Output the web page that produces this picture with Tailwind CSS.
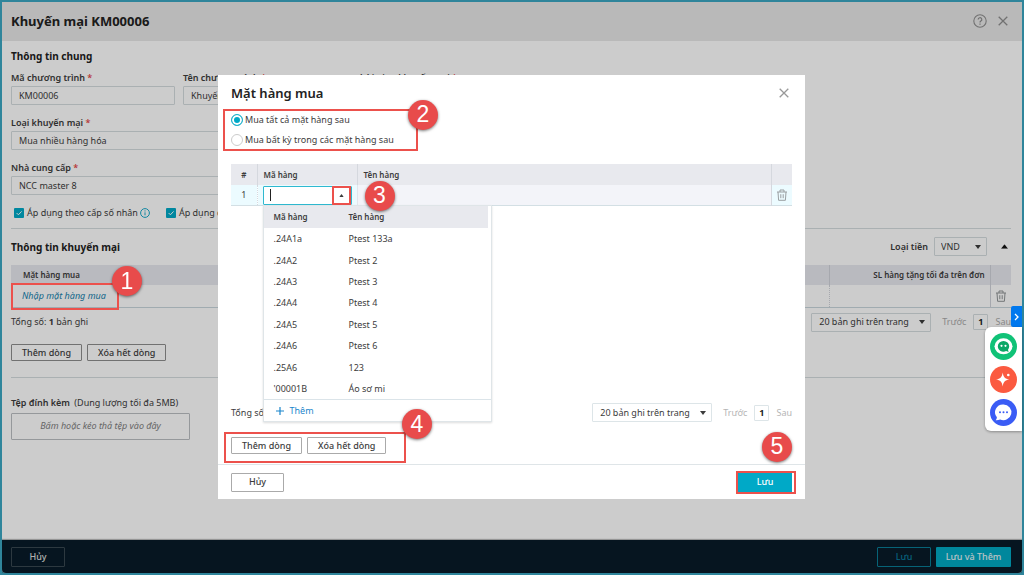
<!DOCTYPE html>
<html lang="vi">
  <head>
    <meta charset="UTF-8" />
    <meta name="viewport" content="width=device-width, initial-scale=1.0" />
    <script src="https://cdn.jsdelivr.net/npm/@tailwindcss/browser@4"></script>
    <title>Khuyến mại KM00006</title>
  </head>
  <body class="h-screen overflow-hidden bg-[#2f859b] p-0.5 font-['Noto_Sans',sans-serif] text-[9px] leading-3 text-[#3c3c3c]">
    <!-- Shared icons -->
    <svg class="hidden">
      <symbol id="caret" viewBox="0 0 6 4"><path d="M0 0h6L3 4z" fill="currentColor" /></symbol>
      <symbol id="close" viewBox="0 0 10 10"><path d="M.7.7l8.6 8.6M9.3.7L.7 9.3" fill="none" stroke="currentColor" stroke-width="1.3" /></symbol>
      <symbol id="trash" viewBox="0 0 12 12">
        <path d="M1 3h10M4 3V1h4v2M2 3l.6 8.3h6.8L10 3M4.8 5.2v4M7.2 5.2v4" fill="none" stroke="currentColor" stroke-width="1" />
      </symbol>
      <symbol id="check" viewBox="0 0 10 10"><path d="M2.6 5l1.8 1.8 3.2-3.4" fill="none" stroke="#fff" stroke-width="1" /></symbol>
    </svg>

    <div class="flex h-full flex-col overflow-hidden rounded-b-sm bg-white">
      <header class="flex h-[39px] shrink-0 items-center justify-between bg-[#e8e8e8] pr-[11px] pb-px pl-[9px]">
        <h1 class="text-[13px] leading-[18px] font-bold text-[#222]">Khuyến mại KM00006</h1>
        <div class="flex items-center gap-[11px] pr-[3px] text-[#8e8e8e]">
          <button aria-label="Trợ giúp">
            <svg class="size-[14px]" viewBox="0 0 14 14" fill="none" stroke="currentColor">
              <circle cx="7" cy="7" r="6.2" stroke-width="1.1" />
              <path d="M5.2 5.6a1.8 1.8 0 1 1 2.7 1.5c-.6.4-.9.7-.9 1.4M7 9.5v1.2" stroke-width="1.2" />
            </svg>
          </button>
          <button aria-label="Đóng"><svg class="size-[10px]"><use href="#close" /></svg></button>
        </div>
      </header>

      <main class="flex-1 pt-[7px] pr-[11px] pl-[9px]">
        <h2 class="text-[10px] leading-4 font-bold text-[#222]">Thông tin chung</h2>
        <div class="mt-2 flex gap-2">
          <div class="flex w-[164px] flex-col gap-0.5">
            <label for="code" class="font-semibold">Mã chương trình <span class="text-[#e54848]">*</span></label>
            <input id="code" value="KM00006" class="h-[19px] rounded-[1px] border border-[#d5dcdf] px-[7px]" />
          </div>
          <div class="flex w-[164px] flex-col gap-0.5">
            <label for="name" class="font-semibold">Tên chương trình <span class="text-[#e54848]">*</span></label>
            <input id="name" value="Khuyến mại KM00006" class="h-[19px] rounded-[1px] border border-[#d5dcdf] px-[7px]" />
          </div>
          <div class="flex w-[164px] flex-col gap-0.5">
            <label for="time" class="font-semibold">Thời gian khuyến mại <span class="text-[#e54848]">*</span></label>
            <input id="time" class="h-[19px] rounded-[1px] border border-[#d5dcdf] px-[7px]" />
          </div>
        </div>
        <div class="mt-3 flex w-[336px] flex-col gap-0.5">
          <label for="type" class="font-semibold">Loại khuyến mại <span class="text-[#e54848]">*</span></label>
          <select id="type" class="h-[19px] appearance-none rounded-[1px] border border-[#d5dcdf] px-[7px]">
            <option>Mua nhiều hàng hóa</option>
          </select>
        </div>
        <div class="mt-3 flex w-[336px] flex-col gap-0.5">
          <label for="supplier" class="font-semibold">Nhà cung cấp <span class="text-[#e54848]">*</span></label>
          <select id="supplier" class="h-[19px] appearance-none rounded-[1px] border border-[#d5dcdf] px-[7px]">
            <option>NCC master 8</option>
          </select>
        </div>
        <div class="mt-3 flex h-3 items-center pl-[3px]">
          <label class="flex items-center gap-[3px]">
            <span class="grid size-[10px]">
              <input type="checkbox" checked class="col-start-1 row-start-1 size-[10px] appearance-none rounded-[1px] bg-[#00a9c7]" />
              <svg class="pointer-events-none col-start-1 row-start-1 size-[10px]"><use href="#check" /></svg>
            </span>
            Áp dụng theo cấp số nhân
          </label>
          <svg class="mr-4 ml-0.5 size-[10px] text-[#18a9cb]" viewBox="0 0 10 10" fill="none" stroke="currentColor">
            <circle cx="5" cy="5" r="4.4" /><path d="M5 4.3v3M5 2.4v1.1" />
          </svg>
          <label class="flex items-center gap-[3px]">
            <span class="grid size-[10px]">
              <input type="checkbox" checked class="col-start-1 row-start-1 size-[10px] appearance-none rounded-[1px] bg-[#00a9c7]" />
              <svg class="pointer-events-none col-start-1 row-start-1 size-[10px]"><use href="#check" /></svg>
            </span>
            Áp dụng cùng KM khác
          </label>
        </div>

        <hr class="mt-[9px] border-[#d5dcdf]" />

        <div class="mt-2 flex items-center justify-between">
          <h2 class="text-[10px] leading-4 font-bold text-[#222]">Thông tin khuyến mại</h2>
          <div class="flex items-center">
            <label for="currency" class="font-semibold">Loại tiền</label>
            <div class="ml-[6px] grid items-center">
              <select id="currency" class="col-start-1 row-start-1 h-[19px] w-[53px] appearance-none rounded-[1px] border border-[#d5dcdf] px-1.5">
                <option>VND</option>
              </select>
              <svg class="pointer-events-none col-start-1 row-start-1 mr-1.5 h-[4px] w-[6px] justify-self-end"><use href="#caret" /></svg>
            </div>
            <button aria-label="Thu gọn" class="mr-[3px] ml-[14px] text-[#111]">
              <svg class="h-[5px] w-[7px] rotate-180" viewBox="0 0 6 4"><use href="#caret" /></svg>
            </button>
          </div>
        </div>

        <table class="mt-[9px] w-full table-fixed border-b border-[#c9d6dc]">
          <colgroup>
            <col />
            <col class="w-[161px]" />
            <col class="w-[21px]" />
          </colgroup>
          <thead class="bg-[#e8e9ef]">
            <tr class="h-5 text-[8px]">
              <th class="pl-3 text-left font-semibold">Mặt hàng mua</th>
              <th class="border-l border-[#d0d3da] pr-[5px] text-right font-semibold">SL hàng tặng tối đa trên đơn</th>
              <th class="border-l border-[#d0d3da]"></th>
            </tr>
          </thead>
          <tbody>
            <tr class="h-[22px]">
              <td class="relative pl-[11px] text-left">
                <a href="#" class="text-[#157fae] italic">Nhập mặt hàng mua</a>
                <span class="absolute -top-0.5 left-0 z-30 h-[27px] w-[108px] border-2 border-[#ec514c]"></span>
                <span class="absolute -top-[19px] left-[101px] z-30 grid size-[30px] place-items-center rounded-full bg-[#e84b4b] font-['Liberation_Sans',sans-serif] text-[23px] leading-none font-normal text-white shadow-[0_1px_3px_#0008]">1</span>
              </td>
              <td class="border-l border-dotted border-[#d0d3da]"></td>
              <td class="border-l border-[#d0d3da] text-[#909496]">
                <button aria-label="Xóa dòng" class="mx-auto block"><svg class="size-3"><use href="#trash" /></svg></button>
              </td>
            </tr>
          </tbody>
        </table>

        <div class="mt-[5px] flex items-center justify-between">
          <p>Tổng số: <b>1</b> bản ghi</p>
          <div class="flex items-center text-[#aaa]">
            <div class="grid items-center text-[#3c3c3c]">
              <select aria-label="Số bản ghi" class="col-start-1 row-start-1 h-[19px] w-[120px] appearance-none rounded-[1px] border border-[#d5dcdf] px-[7px]">
                <option>20 bản ghi trên trang</option>
              </select>
              <svg class="pointer-events-none col-start-1 row-start-1 mr-1.5 h-[4px] w-[6px] justify-self-end"><use href="#caret" /></svg>
            </div>
            <button class="ml-[11px]">Trước</button>
            <button class="mx-[7px] h-4 w-[15px] rounded-[1px] border border-[#d5dcdf] font-bold text-[#222]">1</button>
            <button>Sau</button>
          </div>
        </div>

        <div class="mt-3 flex gap-[5px] font-medium">
          <button class="h-[17px] rounded-[1px] border border-[#8e8e8e] px-[10px] leading-none">Thêm dòng</button>
          <button class="h-[17px] rounded-[1px] border border-[#8e8e8e] px-[10px] leading-none">Xóa hết dòng</button>
        </div>

        <hr class="mt-4 border-[#d5dcdf]" />

        <p class="mt-[19px]"><b class="mr-0.5 font-semibold">Tệp đính kèm</b> (Dung lượng tối đa 5MB)</p>
        <button class="mt-1 block h-[27px] w-[179px] rounded-[1px] border border-[#bbbec2] text-[#808080] italic">Bấm hoặc kéo thả tệp vào đây</button>
      </main>

      <footer class="flex h-[33px] shrink-0 items-center gap-[5px] bg-[#081b29] pr-[11px] pl-[9px] font-medium text-[#ddd] shadow-[0_-1px_1px_#0004]">
        <button class="mr-auto h-5 w-[54px] rounded-[1px] border border-[#394850]">Hủy</button>
        <button class="h-5 w-[54px] rounded-[1px] border border-[#087c95] text-[#087c9e]">Lưu</button>
        <button class="h-5 w-[75px] rounded-[1px] bg-[#00a9c3] text-[#e8f4f8]">Lưu và Thêm</button>
      </footer>
    </div>

    <!-- Modal -->
    <div class="fixed inset-0.5 z-20 flex items-center justify-center bg-black/20">
      <div role="dialog" aria-labelledby="dialog-title" class="relative mr-px mb-px w-[587px] bg-white text-[#3c3c3c]">
        <div class="px-[13px] pt-[9px]">
          <div class="flex items-center justify-between">
            <h2 id="dialog-title" class="text-[13px] leading-[18px] font-semibold text-[#222]">Mặt hàng mua</h2>
            <button aria-label="Đóng" class="mr-[3px] text-[#999]"><svg class="size-[10px]"><use href="#close" /></svg></button>
          </div>

          <div class="relative mt-3 flex flex-col items-start gap-2">
            <label class="flex h-3 items-center gap-0.5">
              <input type="radio" name="mode" checked class="size-3 appearance-none rounded-full border border-[#ccc] checked:border-[#1fb2cc] checked:bg-[#00a9c7] checked:shadow-[inset_0_0_0_2px_white]" />
              Mua tất cả mặt hàng sau
            </label>
            <label class="flex h-3 items-center gap-0.5">
              <input type="radio" name="mode" class="size-3 appearance-none rounded-full border border-[#ccc] checked:border-[#1fb2cc] checked:bg-[#00a9c7] checked:shadow-[inset_0_0_0_2px_white]" />
              Mua bất kỳ trong các mặt hàng sau
            </label>
            <span class="pointer-events-none absolute -top-[5px] -left-2 h-[42px] w-[195px] border-2 border-[#ec514c]"></span>
            <span class="absolute -top-[14px] left-[177px] grid size-[30px] place-items-center rounded-full bg-[#e84b4b] font-['Liberation_Sans',sans-serif] text-[23px] leading-none font-normal text-white shadow-[0_1px_3px_#0008]">2</span>
          </div>

          <table class="mt-[18px] w-full table-fixed border-b border-[#d3dfe4]">
            <colgroup>
              <col class="w-[26px]" />
              <col class="w-[100px]" />
              <col />
              <col class="w-[21px]" />
            </colgroup>
            <thead class="bg-[#e8e9ee]">
              <tr class="h-[21px] text-[8px]">
                <th class="pt-px font-semibold">#</th>
                <th class="border-l border-[#d5d8de] pt-px pl-[6px] text-left font-semibold">Mã hàng</th>
                <th class="border-l border-[#d5d8de] pt-px pl-[6px] text-left font-semibold">Tên hàng</th>
                <th class="border-l border-[#d5d8de]"></th>
              </tr>
            </thead>
            <tbody>
              <tr class="h-[21px] bg-[#ecfbff]">
                <td class="text-center">1</td>
                <td class="relative border-l border-dotted border-[#d5d8de] px-[5px]">
                  <div class="flex h-[19px] items-center rounded-[1px] border border-[#2fb9d0] bg-white">
                    <span class="ml-[6px] h-3 w-px bg-[#222]"></span>
                    <input aria-label="Mã hàng" class="h-full min-w-0 flex-1 outline-none" />
                    <button aria-label="Mở danh sách" class="grid h-[19px] w-[19px] place-items-center border-2 border-[#ec514c]">
                      <svg class="h-[3px] w-[5px] rotate-180" viewBox="0 0 6 4"><use href="#caret" /></svg>
                    </button>
                  </div>
                  <span class="absolute -top-[4px] left-[107px] z-10 grid size-[30px] place-items-center rounded-full bg-[#e84b4b] font-['Liberation_Sans',sans-serif] text-[23px] leading-none font-normal text-white shadow-[0_1px_3px_#0008]">3</span>

                  <!-- Product list -->
                  <div class="absolute top-full left-[5px] w-[229px] border border-[#dfe5e8] bg-white shadow-[0_1px_2px_#0002]">
                    <table class="w-full table-fixed text-left">
                      <colgroup>
                        <col class="w-[85px]" />
                        <col />
                      </colgroup>
                      <thead>
                        <tr class="h-[22px] text-[8px]">
                          <th class="bg-[#e8e9ee] pl-[10px] font-semibold">Mã hàng</th>
                          <th class="border-r-3 border-white bg-[#e8e9ee] font-semibold">Tên hàng</th>
                        </tr>
                      </thead>
                      <tbody>
                        <tr class="h-[22px]"><td class="pl-[10px]">.24A1a</td><td>Ptest 133a</td></tr>
                        <tr class="h-[21px]"><td class="pl-[10px]">.24A2</td><td>Ptest 2</td></tr>
                        <tr class="h-[21px]"><td class="pl-[10px]">.24A3</td><td>Ptest 3</td></tr>
                        <tr class="h-[22px]"><td class="pl-[10px]">.24A4</td><td>Ptest 4</td></tr>
                        <tr class="h-[21px]"><td class="pl-[10px]">.24A5</td><td>Ptest 5</td></tr>
                        <tr class="h-[22px]"><td class="pl-[10px]">.24A6</td><td>Ptest 6</td></tr>
                        <tr class="h-[21px]"><td class="pl-[10px]">.25A6</td><td>123</td></tr>
                        <tr class="h-[21px]"><td class="pl-[10px]">'00001B</td><td>Áo sơ mi</td></tr>
                      </tbody>
                    </table>
                    <button class="flex h-[22px] w-full items-center gap-[6px] border-t border-[#dbe4e9] pl-3 text-[#1b86cc]">
                      <svg class="size-2" viewBox="0 0 8 8"><path d="M4 0v8M0 4h8" stroke="currentColor" stroke-width="1.2" /></svg>
                      Thêm
                    </button>
                  </div>
                </td>
                <td class="border-l border-[#e2e6ec] bg-[#f3f4f9]"></td>
                <td class="border-l border-[#d5d8de] text-[#9a9fa2]">
                  <button aria-label="Xóa dòng" class="mx-auto block"><svg class="size-3"><use href="#trash" /></svg></button>
                </td>
              </tr>
            </tbody>
          </table>

          <div class="mt-[197px] flex items-center justify-between">
            <p>Tổng số</p>
            <div class="flex items-center text-[#b5b5b5]">
              <div class="grid items-center text-[#3c3c3c]">
                <select aria-label="Số bản ghi" class="col-start-1 row-start-1 h-[19px] w-[120px] appearance-none rounded-[1px] border border-[#dde5e8] px-[7px]">
                  <option>20 bản ghi trên trang</option>
                </select>
                <svg class="pointer-events-none col-start-1 row-start-1 mr-1.5 h-[4px] w-[6px] justify-self-end"><use href="#caret" /></svg>
              </div>
              <button class="ml-[11px]">Trước</button>
              <button class="mx-[7px] h-4 w-[15px] rounded-[1px] border border-[#dde5e8] font-bold text-[#222]">1</button>
              <button>Sau</button>
            </div>
          </div>

          <div class="relative mt-[15px] flex gap-[5px] font-medium">
            <button class="h-[17px] rounded-[1px] border border-[#aaa] px-[10px] leading-none">Thêm dòng</button>
            <button class="h-[17px] rounded-[1px] border border-[#aaa] px-[10px] leading-none">Xóa hết dòng</button>
            <span class="pointer-events-none absolute -top-[5px] -left-[7px] h-[31px] w-[182px] border-2 border-[#ec514c]"></span>
            <span class="absolute -top-[28px] left-[171px] grid size-[30px] place-items-center rounded-full bg-[#e84b4b] font-['Liberation_Sans',sans-serif] text-[23px] leading-none font-normal text-white shadow-[0_1px_3px_#0008]">4</span>
          </div>
        </div>

        <div class="mt-[10px] flex h-[35px] items-center justify-between border-t border-[#dfe5e8] px-[13px] font-medium">
          <button class="h-[19px] w-[53px] rounded-[1px] border border-[#aaa]">Hủy</button>
          <div class="relative">
            <button class="block h-[19px] w-[54px] bg-[#00a9c7] text-white">Lưu</button>
            <span class="pointer-events-none absolute -top-0.5 -right-[4px] h-[23px] w-[60px] border-2 border-[#ec514c]"></span>
            <span class="absolute -top-[41px] right-0 grid size-[30px] place-items-center rounded-full bg-[#e84b4b] font-['Liberation_Sans',sans-serif] text-[23px] leading-none font-normal text-white shadow-[0_1px_3px_#0008]">5</span>
          </div>
        </div>
      </div>
    </div>

    <!-- Floating support widget -->
    <aside class="fixed top-[306px] right-0.5 z-30 flex flex-col items-end">
      <button aria-label="Thu gọn trợ lý" class="grid h-[21px] w-[11px] place-items-center rounded-l-[2px] bg-[#0078ee]">
        <svg class="h-2 w-[5px]" viewBox="0 0 5 8"><path d="M1 1l3 3-3 3" fill="none" stroke="#fff" stroke-width="1.3" /></svg>
      </button>
      <div class="flex flex-col gap-[6px] rounded-l-md bg-white px-[5px] pt-[6px] pb-[5px] shadow-[0_1px_3px_#0005]">
        <button aria-label="Trợ lý">
          <svg class="size-[27px]" viewBox="0 0 27 27">
            <circle cx="13.5" cy="13.5" r="13.5" fill="#10c277" />
            <ellipse cx="13.5" cy="13.3" rx="9" ry="8" fill="#fff" />
            <path d="M7.8 13.3a5.7 5.3 0 1 1 11.4 0c0 1.3-.4 2.5-1.2 3.4l.6 2.2-2.5-.8a5.7 5.3 0 0 1-8.3-4.8z" fill="#0aa766" />
            <circle cx="11.5" cy="12.8" r="1.1" fill="#fff" /><circle cx="15.5" cy="12.8" r="1.1" fill="#fff" />
          </svg>
        </button>
        <button aria-label="AI">
          <svg class="size-[27px]" viewBox="0 0 27 27">
            <circle cx="13.5" cy="13.5" r="13.5" fill="#fb5a40" />
            <path d="M12.7 6.5c.7 4.700 2.200 6.200 6.700 7-4.500.8-6 2.300-6.700 7-.7-4.700-2.200-6.200-6.700-7 4.500-.8 6-2.300 6.700-7z" fill="#fff" />
            <circle cx="18.3" cy="9" r="1.3" fill="#fff" />
          </svg>
        </button>
        <button aria-label="Trò chuyện">
          <svg class="size-[27px]" viewBox="0 0 27 27">
            <circle cx="13.5" cy="13.5" r="13.5" fill="#3a5cf5" />
            <path d="M13.5 5.5a8 7.8 0 1 1-3.4 14.9c-1.3.6-2.8.9-4.400.8.8-.8 1.200-1.800 1.200-2.900a8 7.8 0 0 1 6.600-12.800z" fill="#fff" />
            <circle cx="10" cy="13.3" r="1" fill="#3a5cf5" /><circle cx="13.5" cy="13.3" r="1" fill="#3a5cf5" /><circle cx="17" cy="13.3" r="1" fill="#3a5cf5" />
          </svg>
        </button>
      </div>
    </aside>
  </body>
</html>
